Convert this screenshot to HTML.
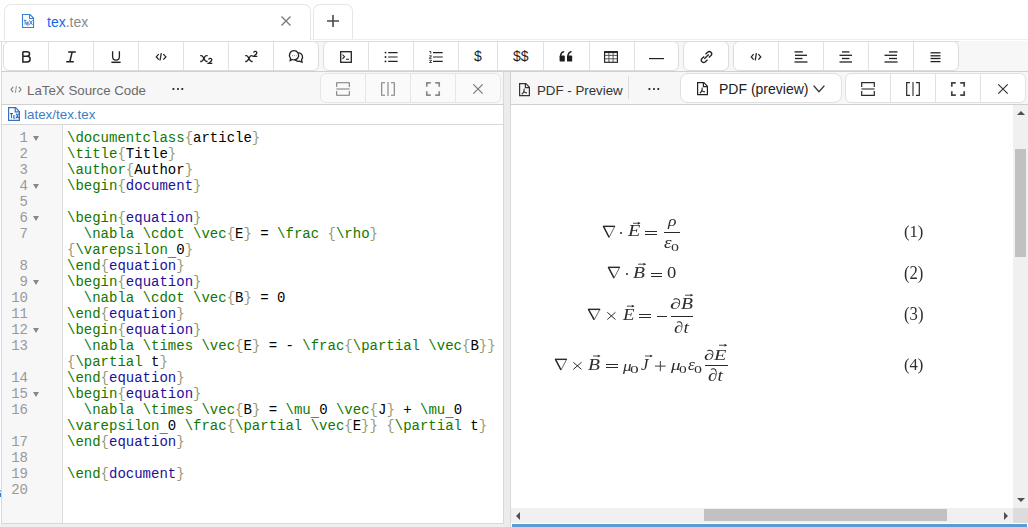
<!DOCTYPE html>
<html><head><meta charset="utf-8"><style>
*{box-sizing:border-box;margin:0;padding:0}
html,body{width:1028px;height:527px;overflow:hidden;background:#fff;font-family:"Liberation Sans",sans-serif}
body{position:relative}
.a{position:absolute}
svg{position:absolute;overflow:visible}
.tab{position:absolute;border:1px solid #e6e6e6;border-bottom:none;border-radius:7px 7px 0 0;background:#fff}
.grp{position:absolute;top:41px;height:30px;border:1px solid #dcdcdc;border-radius:6px;background:#fff;overflow:hidden}
.dv{position:absolute;top:0;width:1px;height:29px;background:#e0e0e0}
.ph{position:absolute;top:71px;height:34px;background:#f7f7f7;border-top:1px solid #d0d0d0;border-bottom:1px solid #d0d0d0}
.bg2{position:absolute;top:73px;height:30px;border:1px solid #e6e6e6;border-radius:6px;background:#fafafa;overflow:hidden}
.code{position:absolute;left:67px;font-family:"Liberation Mono",monospace;font-size:14px;line-height:16px;white-space:pre;color:#000}
.t{color:#117700}.b{color:#999977}.at{color:#221199}
.ln{position:absolute;left:2px;width:26px;text-align:right;color:#999;font-family:"Liberation Mono",monospace;font-size:14px;line-height:16px}
.fold{position:absolute;left:33px;width:0;height:0;border-left:3px solid transparent;border-right:3px solid transparent;border-top:5px solid #888}
.m{position:absolute;font-family:"Liberation Serif",serif;font-size:16px;line-height:16px;color:#222;white-space:nowrap}
</style></head><body>
<!-- tab bar -->
<div class="tab" style="left:4px;top:4px;width:307px;height:36px"></div>
<div class="tab" style="left:313px;top:4px;width:40px;height:36px"></div>
<div class="a" style="left:311px;top:39px;width:717px;height:1px;background:#eee"></div>
<!-- tex file icon -->
<svg style="left:22px;top:14px" width="12" height="14" viewBox="0 0 12 14" fill="none" stroke="#3a7fd0" stroke-width="1.1">
<path d="M0.5 0.5H8L11.5 4V13.5H0.5Z"/><path d="M7.5 0.5V4.5H11.5"/>
<path d="M1.8 6.3H4.4M3.1 6.3V10.6M4.8 8.2H6.8M4.8 9.6H6.6M4.8 11H6.8M4.8 8.2V11M7.4 6.3L10.4 10.8M10.4 6.3L7.4 10.8" stroke-width="1"/>
</svg>
<div class="a" style="left:47px;top:14px;font-size:14px;line-height:17px"><span style="color:#1269f0">tex</span><span style="color:#8a8a8a">.tex</span></div>
<svg style="left:281px;top:16px" width="10" height="10" viewBox="0 0 10 10" stroke="#777" stroke-width="1.3"><path d="M0.5 0.5L9.5 9.5M9.5 0.5L0.5 9.5"/></svg>
<svg style="left:327px;top:15px" width="12" height="12" viewBox="0 0 12 12" stroke="#4a4a4a" stroke-width="1.6"><path d="M6 0V12M0 6H12"/></svg>
<div class="a" style="left:1px;top:41px;width:1027px;height:31px;background:#f7f7f7;border-bottom:1px solid #d5d5d5;border-left:1px solid #dcdcdc"></div>
<div class="a" style="left:2px;top:42px;width:10px;height:28px;background:#fff"></div>
<div class="a" style="left:0px;top:41px;width:959px;height:1px;background:#dcdcdc"></div>
<div class="grp" style="left:3px;width:316px"><div class="dv" style="left:44px"></div><div class="dv" style="left:89px"></div><div class="dv" style="left:134px"></div><div class="dv" style="left:179px"></div><div class="dv" style="left:224px"></div><div class="dv" style="left:269px"></div></div>
<div class="grp" style="left:323px;width:356px"><div class="dv" style="left:44px"></div><div class="dv" style="left:89px"></div><div class="dv" style="left:134px"></div><div class="dv" style="left:173px"></div><div class="dv" style="left:219px"></div><div class="dv" style="left:265px"></div><div class="dv" style="left:310px"></div></div>
<div class="grp" style="left:683px;width:46px"></div>
<div class="grp" style="left:733px;width:226px"><div class="dv" style="left:44px"></div><div class="dv" style="left:89px"></div><div class="dv" style="left:134px"></div><div class="dv" style="left:179px"></div></div>
<svg style="left:21px;top:50px" width="11" height="14" viewBox="0 0 11 14" fill="none" stroke="#222" stroke-width="1.5" ><path d="M1.85 1.85H5.9Q8.55 1.85 8.55 4.0Q8.55 6.15 5.9 6.15H1.85M5.9 6.15H6.3Q9.15 6.15 9.15 9.05Q9.15 11.95 6.3 11.95H1.85V1.85"/></svg>
<svg style="left:66px;top:51px" width="10" height="12" viewBox="0 0 10 12" fill="none" stroke="#222" stroke-width="1.5" ><path d="M2.2 0.9H9.8M0.2 10.7H7.8M6.2 0.9L3.8 10.7"/></svg>
<svg style="left:111px;top:51px" width="10" height="12" viewBox="0 0 10 12" fill="none" stroke="#222" stroke-width="1.3" ><path d="M1.6 0.2V5.2Q1.6 9.1 5 9.1Q8.4 9.1 8.4 5.2V0.2"/><path d="M0.4 11.3H9.6" stroke-width="1.5"/></svg>
<svg style="left:155px;top:53px" width="12" height="8" viewBox="0 0 12 8" fill="none" stroke="#222" stroke-width="1.25" ><path d="M3.7 1.1L1.3 3.9L3.8 6.6M8.3 1.1L10.9 3.9L8.3 6.6M6.3 0.2L5 7.5"/></svg>
<svg style="left:199.5px;top:54.8px" width="8" height="7" viewBox="0 0 8 7" fill="none" stroke="#222" stroke-width="1.4" ><path d="M0.2 0.6H1.4Q2.6 0.6 3.9 3.5Q5.2 6.4 6.4 6.4H7.6M0.2 6.4H1.4Q2.6 6.4 3.9 3.5Q5.2 0.6 6.4 0.6H7.6" stroke-width="1.45"/></svg>
<svg style="left:207.8px;top:58.2px" width="5" height="6" viewBox="0 0 5 6" fill="none" stroke="#222" stroke-width="1.4" ><path d="M0.5 1.5Q1.2 0.3 2.4 0.4Q4 0.6 3.8 2Q3.6 2.9 2.2 3.9L0.4 5.3H4.3" stroke-width="1.2"/></svg>
<svg style="left:244.5px;top:54.8px" width="8" height="7" viewBox="0 0 8 7" fill="none" stroke="#222" stroke-width="1.4" ><path d="M0.2 0.6H1.4Q2.6 0.6 3.9 3.5Q5.2 6.4 6.4 6.4H7.6M0.2 6.4H1.4Q2.6 6.4 3.9 3.5Q5.2 0.6 6.4 0.6H7.6" stroke-width="1.45"/></svg>
<svg style="left:252.6px;top:51.2px" width="5" height="6" viewBox="0 0 5 6" fill="none" stroke="#222" stroke-width="1.4" ><path d="M0.5 1.5Q1.2 0.3 2.4 0.4Q4 0.6 3.8 2Q3.6 2.9 2.2 3.9L0.4 5.3H4.3" stroke-width="1.2"/></svg>
<svg style="left:289px;top:50px" width="14" height="13" viewBox="0 0 14 13" fill="none" stroke="#222" stroke-width="1.3" ><path d="M5.2 0.7A4.6 4.6 0 1 1 3.2 9.5L1.2 10.6L1.6 8.3A4.6 4.6 0 0 1 5.2 0.7Z"/><path d="M9.6 2.6A4.4 4.4 0 0 1 12.6 9.7L13 12.1L10.5 11.1A4.6 4.6 0 0 1 6.2 10.1"/><circle cx="3.4" cy="5.7" r="0.45" fill="#222" stroke="none"/><circle cx="5.4" cy="5.7" r="0.45" fill="#222" stroke="none"/><circle cx="7.4" cy="5.7" r="0.45" fill="#666" stroke="none"/></svg>
<svg style="left:340px;top:51px" width="12" height="12" viewBox="0 0 12 12" fill="none" stroke="#222" stroke-width="1.3" ><rect x="0.7" y="0.7" width="10.6" height="10.6"/><path d="M2.5 3.5L4.5 5.7L2.5 7.9M6 8.3H9" stroke-width="1.1"/></svg>
<svg style="left:384px;top:51px" width="14" height="12" viewBox="0 0 14 12" fill="none" stroke="#222" stroke-width="1.2" ><circle cx="1.5" cy="1.6" r="0.95" fill="#222" stroke="none"/><circle cx="1.5" cy="6" r="0.95" fill="#222" stroke="none"/><circle cx="1.5" cy="10.4" r="0.95" fill="#222" stroke="none"/><path d="M4.2 1.6H13.6M4.2 6H13.6M4.2 10.4H13.6"/></svg>
<svg style="left:429px;top:51px" width="14" height="12" viewBox="0 0 14 12" fill="none" stroke="#222" stroke-width="1.2" ><path d="M4 1.6H13.7M4 6H13.7M4 10.4H13.7"/><path d="M0.3 0.5H1.8V2.8M0.3 4.8H2.6L0.3 7.3H2.6M0.3 9.3H2.6L1.5 10.4L2.6 11.5H0.3" stroke-width="0.9"/></svg>
<div class="a" style="left:474px;top:47px;font-size:14px;line-height:19px;color:#222">$</div>
<div class="a" style="left:513px;top:47px;font-size:14px;line-height:19px;color:#222">$$</div>
<svg style="left:559px;top:50px" width="14" height="12" viewBox="0 0 14 12" fill="none" stroke="none" stroke-width="1.4" ><rect x="0.6" y="5.6" width="5.2" height="6" rx="0.9" fill="#1e1e1e"/><path d="M1.5 7Q1.5 2.6 4.6 1.7" fill="none" stroke="#1e1e1e" stroke-width="1.5" stroke-linecap="round"/><g transform="translate(7.4,0)"><rect x="0.6" y="5.6" width="5.2" height="6" rx="0.9" fill="#1e1e1e"/><path d="M1.5 7Q1.5 2.6 4.6 1.7" fill="none" stroke="#1e1e1e" stroke-width="1.5" stroke-linecap="round"/></g></svg>
<svg style="left:604px;top:51px" width="14" height="12" viewBox="0 0 14 12" fill="none" stroke="#222" stroke-width="1.15" ><path d="M0.6 4.4H13.4M0.6 7.8H13.4M4.9 0.7V11.3M9.1 0.7V11.3" stroke="#555" stroke-width="1"/><rect x="0.6" y="0.7" width="12.8" height="10.6"/><path d="M0.6 1.1H13.4" stroke-width="1.9"/></svg>
<svg style="left:649px;top:58px" width="15" height="2" viewBox="0 0 15 2" fill="none" stroke="#222" stroke-width="1.2" ><path d="M0 0.6H15"/></svg>
<svg style="left:700px;top:51px" width="13" height="12" viewBox="0 0 13 12" fill="none" stroke="#222" stroke-width="1.3" ><path d="M5.5 3.3L7.6 1.3Q9.3 -0.2 11 1.3Q12.6 2.9 11 4.6L8.8 6.6"/><path d="M7.5 8.7L5.4 10.7Q3.7 12.2 2 10.7Q0.4 9.1 2 7.4L4.2 5.4"/><path d="M4.3 7.7L8.7 3.5"/></svg>
<svg style="left:750px;top:53px" width="12" height="8" viewBox="0 0 12 8" fill="none" stroke="#222" stroke-width="1.25" ><path d="M3.6 1.1L1.3 3.9L3.6 6.6M8.4 1.1L10.8 3.9L8.4 6.6M6.4 0.2L5.2 7.3"/></svg>
<svg style="left:794px;top:51px" width="14" height="12" viewBox="0 0 14 12" fill="none" stroke="#222" stroke-width="1.3" ><path d="M0.5 0.9H8.8"/><path d="M1 4.3H13"/><path d="M1 7.5H8.5"/><path d="M0.5 11H13.5"/></svg>
<svg style="left:839px;top:51px" width="14" height="12" viewBox="0 0 14 12" fill="none" stroke="#222" stroke-width="1.3" ><path d="M3 0.9H10.5"/><path d="M0.5 4.3H13"/><path d="M3 7.5H10.5"/><path d="M0.5 11H13"/></svg>
<svg style="left:884px;top:51px" width="14" height="12" viewBox="0 0 14 12" fill="none" stroke="#222" stroke-width="1.3" ><path d="M5 0.9H13.5"/><path d="M0.5 4.3H13"/><path d="M5 7.5H13"/><path d="M0.5 11H13.5"/></svg>
<svg style="left:929px;top:51px" width="14" height="12" viewBox="0 0 14 12" fill="none" stroke="#222" stroke-width="1.3" ><path d="M1.5 1.8H11.5"/><path d="M1.5 4.8H11.5"/><path d="M1.5 7.5H11.5"/><path d="M1.5 10.6H11.5"/></svg>
<div class="ph" style="left:1px;width:503px;border-left:1px solid #d8d8d8;border-right:1px solid #d8d8d8"></div>
<div class="a" style="left:504px;top:71px;width:6px;height:456px;background:#ececec;border-top:1px solid #d0d0d0"></div>
<div class="a" style="left:510px;top:71px;width:1px;height:456px;background:#dadada"></div>
<div class="ph" style="left:510px;width:518px;border-left:1px solid #d0d0d0"></div>
<div class="a" style="left:1px;top:105px;width:503px;height:419px;border-left:1px solid #d8d8d8;border-right:1px solid #d8d8d8;border-bottom:1px solid #d8d8d8;background:#fff"></div>
<div class="a" style="left:2px;top:124px;width:501px;height:1px;background:#d8d8d8"></div>
<div class="a" style="left:2px;top:125px;width:61px;height:398px;background:#f7f7f7;border-right:1px solid #dcdcdc"></div>
<div class="a" style="left:0;top:524px;width:504px;height:3px;background:#efefef"></div>
<div class="a" style="left:0;top:490px;width:1px;height:2px;background:#8ab8f0"></div><div class="a" style="left:0;top:493px;width:1px;height:4px;background:#2a7be0"></div>
<svg style="left:10px;top:86px" width="12" height="8" viewBox="0 0 12 8" fill="none" stroke="#777" stroke-width="1.05" ><path d="M3.2 0.9L1 3.5L3.2 6.1M8.8 0.9L11 3.5L8.8 6.1"/><path d="M6.4 0.1L5.4 6.9" stroke-width="0.8"/></svg>
<div class="a" style="left:27px;top:83px;font-size:13.3px;line-height:16px;color:#6b6b6b">LaTeX Source Code</div>
<svg style="left:172px;top:87px" width="12" height="3" viewBox="0 0 12 3" fill="#2a2a2a" stroke="none" stroke-width="1.4" ><rect x="0.5" y="1.1" width="1.8" height="1.8" rx="0.3"/><rect x="5.1" y="1.1" width="1.8" height="1.8" rx="0.3"/><rect x="9.4" y="1.1" width="1.8" height="1.8" rx="0.3"/></svg>
<div class="bg2" style="left:320px;width:181px"><div class="dv" style="left:44px;height:28px;background:#e6e6e6"></div><div class="dv" style="left:89px;height:28px;background:#e6e6e6"></div><div class="dv" style="left:134px;height:28px;background:#e6e6e6"></div></div>
<svg style="left:336px;top:82px" width="14" height="14" viewBox="0 0 14 14" fill="none" stroke="#7a7a7a" stroke-width="1.05" ><path d="M0.7 5V0.7H13.3V5M0.7 9V13.3H13.3V9"/><path d="M0.4 7H13.6" stroke="#b8b8b8" stroke-width="2"/></svg>
<svg style="left:381px;top:82px" width="14" height="14" viewBox="0 0 14 14" fill="none" stroke="#7a7a7a" stroke-width="1.05" ><path d="M4 0.7H0.7V13.3H4M10 0.7H13.3V13.3H10"/><path d="M7 0V14" stroke="#b8b8b8" stroke-width="2"/></svg>
<svg style="left:426px;top:82px" width="14" height="14" viewBox="0 0 14 14" fill="none" stroke="#8a8a8a" stroke-width="1.7" ><path d="M0.8 4.8V0.8H4.8M9.2 0.8H13.2V4.8M13.2 9.2V13.2H9.2M4.8 13.2H0.8V9.2"/></svg>
<svg style="left:473px;top:84px" width="10" height="10" viewBox="0 0 10 10" fill="none" stroke="#777" stroke-width="1.2" ><path d="M0.3 0.3L9.7 9.7M9.7 0.3L0.3 9.7"/></svg>
<svg style="left:519px;top:83px" width="11" height="13" viewBox="0 0 11 13" fill="none" stroke="#333" stroke-width="1.2" ><path d="M0.6 0.6H6.8L10.4 4.2V12.6H0.6Z"/><path d="M6.4 0.6V4.6H10.4"/><path d="M5.1 5.6Q5.5 7.6 4.3 9.6Q3.6 10.6 2.8 11.2M4.6 8.6Q6 9.8 8 9.9" stroke-width="1.1"/></svg>
<div class="a" style="left:537px;top:83px;font-size:13.3px;line-height:16px;color:#333">PDF - Preview</div>
<div class="a" style="left:628px;top:76px;width:1px;height:23px;background:#ddd"></div>
<svg style="left:648px;top:87px" width="12" height="3" viewBox="0 0 12 3" fill="#2a2a2a" stroke="none" stroke-width="1.4" ><rect x="0.5" y="1.1" width="1.8" height="1.8" rx="0.3"/><rect x="5.1" y="1.1" width="1.8" height="1.8" rx="0.3"/><rect x="9.4" y="1.1" width="1.8" height="1.8" rx="0.3"/></svg>
<div class="a" style="left:680px;top:73px;width:162px;height:30px;border:1px solid #e0e0e0;border-radius:8px;background:#fff"></div>
<svg style="left:697px;top:82px" width="11" height="14" viewBox="0 0 11 14" fill="none" stroke="#222" stroke-width="1.2" ><path d="M0.6 0.6H6.8L10.4 4.2V12.6H0.6Z"/><path d="M6.4 0.6V4.6H10.4"/><path d="M5.1 5.6Q5.5 7.6 4.3 9.6Q3.6 10.6 2.8 11.2M4.6 8.6Q6 9.8 8 9.9" stroke-width="1.1"/></svg>
<div class="a" style="left:719px;top:81px;font-size:14px;line-height:17px;color:#222">PDF (preview)</div>
<svg style="left:813px;top:85px" width="12" height="8" viewBox="0 0 12 8" fill="none" stroke="#333" stroke-width="1.4" ><path d="M0.6 0.6L6 6.6L11.4 0.6"/></svg>
<div class="bg2" style="left:845px;width:181px;background:#fff;border-color:#e0e0e0"><div class="dv" style="left:44px;height:28px"></div><div class="dv" style="left:89px;height:28px"></div><div class="dv" style="left:134px;height:28px"></div></div>
<svg style="left:861px;top:82px" width="14" height="14" viewBox="0 0 14 14" fill="none" stroke="#2a2a2a" stroke-width="1.2" ><path d="M0.7 5V0.7H13.3V5M0.7 9V13.3H13.3V9"/><path d="M0.4 7H13.6" stroke="#8a8a8a" stroke-width="2"/></svg>
<svg style="left:906px;top:82px" width="14" height="14" viewBox="0 0 14 14" fill="none" stroke="#2a2a2a" stroke-width="1.2" ><path d="M4 0.7H0.7V13.3H4M10 0.7H13.3V13.3H10"/><path d="M7 0V14" stroke="#8a8a8a" stroke-width="2"/></svg>
<svg style="left:951px;top:82px" width="14" height="14" viewBox="0 0 14 14" fill="none" stroke="#444" stroke-width="1.7" ><path d="M0.8 4.8V0.8H4.8M9.2 0.8H13.2V4.8M13.2 9.2V13.2H9.2M4.8 13.2H0.8V9.2"/></svg>
<svg style="left:998px;top:84px" width="10" height="10" viewBox="0 0 10 10" fill="none" stroke="#333" stroke-width="1.2" ><path d="M0.3 0.3L9.7 9.7M9.7 0.3L0.3 9.7"/></svg>
<svg style="left:8px;top:107px" width="12" height="14" viewBox="0 0 12 14" fill="none" stroke="#3272c2" stroke-width="1.2" ><path d="M0.6 0.6H7.5L11.4 4.5V13.4H0.6Z"/><path d="M7.2 0.6V4.8H11.4"/><path d="M1.9 6.6H5.1M3.5 6.6V11.3M8.1 6.6L10.7 11.3M10.7 6.6L8.1 11.3" stroke-width="1.1"/><path d="M5.5 8.6H7.3M5.5 10H7.1M5.5 11.3H7.3M5.5 8.6V11.3" stroke-width="0.8"/></svg>
<div class="a" style="left:24px;top:107px;font-size:13.4px;line-height:16px;color:#3a7fc6">latex/tex.tex</div>
<div class="ln" style="top:130px">1</div><div class="fold" style="top:136px"></div><div class="code" style="top:130px"><span class="t">\documentclass</span><span class="b">{</span>article<span class="b">}</span></div>
<div class="ln" style="top:146px">2</div><div class="code" style="top:146px"><span class="t">\title</span><span class="b">{</span>Title<span class="b">}</span></div>
<div class="ln" style="top:162px">3</div><div class="code" style="top:162px"><span class="t">\author</span><span class="b">{</span>Author<span class="b">}</span></div>
<div class="ln" style="top:178px">4</div><div class="fold" style="top:184px"></div><div class="code" style="top:178px"><span class="t">\begin</span><span class="b">{</span><span class="at">document</span><span class="b">}</span></div>
<div class="ln" style="top:194px">5</div><div class="ln" style="top:210px">6</div><div class="fold" style="top:216px"></div><div class="code" style="top:210px"><span class="t">\begin</span><span class="b">{</span><span class="at">equation</span><span class="b">}</span></div>
<div class="ln" style="top:226px">7</div><div class="code" style="top:226px">  <span class="t">\nabla</span> <span class="t">\cdot</span> <span class="t">\vec</span><span class="b">{</span>E<span class="b">}</span> = <span class="t">\frac</span> <span class="b">{</span><span class="t">\rho</span><span class="b">}</span></div>
<div class="code" style="top:242px"><span class="b">{</span><span class="t">\varepsilon</span><span style="position:relative;top:2px">_</span>0<span class="b">}</span></div>
<div class="ln" style="top:258px">8</div><div class="code" style="top:258px"><span class="t">\end</span><span class="b">{</span><span class="at">equation</span><span class="b">}</span></div>
<div class="ln" style="top:274px">9</div><div class="fold" style="top:280px"></div><div class="code" style="top:274px"><span class="t">\begin</span><span class="b">{</span><span class="at">equation</span><span class="b">}</span></div>
<div class="ln" style="top:290px">10</div><div class="code" style="top:290px">  <span class="t">\nabla</span> <span class="t">\cdot</span> <span class="t">\vec</span><span class="b">{</span>B<span class="b">}</span> = 0</div>
<div class="ln" style="top:306px">11</div><div class="code" style="top:306px"><span class="t">\end</span><span class="b">{</span><span class="at">equation</span><span class="b">}</span></div>
<div class="ln" style="top:322px">12</div><div class="fold" style="top:328px"></div><div class="code" style="top:322px"><span class="t">\begin</span><span class="b">{</span><span class="at">equation</span><span class="b">}</span></div>
<div class="ln" style="top:338px">13</div><div class="code" style="top:338px">  <span class="t">\nabla</span> <span class="t">\times</span> <span class="t">\vec</span><span class="b">{</span>E<span class="b">}</span> = - <span class="t">\frac</span><span class="b">{</span><span class="t">\partial</span> <span class="t">\vec</span><span class="b">{</span>B<span class="b">}</span><span class="b">}</span></div>
<div class="code" style="top:354px"><span class="b">{</span><span class="t">\partial</span> t<span class="b">}</span></div>
<div class="ln" style="top:370px">14</div><div class="code" style="top:370px"><span class="t">\end</span><span class="b">{</span><span class="at">equation</span><span class="b">}</span></div>
<div class="ln" style="top:386px">15</div><div class="fold" style="top:392px"></div><div class="code" style="top:386px"><span class="t">\begin</span><span class="b">{</span><span class="at">equation</span><span class="b">}</span></div>
<div class="ln" style="top:402px">16</div><div class="code" style="top:402px">  <span class="t">\nabla</span> <span class="t">\times</span> <span class="t">\vec</span><span class="b">{</span>B<span class="b">}</span> = <span class="t">\mu</span><span style="position:relative;top:2px">_</span>0 <span class="t">\vec</span><span class="b">{</span>J<span class="b">}</span> + <span class="t">\mu</span><span style="position:relative;top:2px">_</span>0</div>
<div class="code" style="top:418px"><span class="t">\varepsilon</span><span style="position:relative;top:2px">_</span>0 <span class="t">\frac</span><span class="b">{</span><span class="t">\partial</span> <span class="t">\vec</span><span class="b">{</span>E<span class="b">}</span><span class="b">}</span> <span class="b">{</span><span class="t">\partial</span> t<span class="b">}</span></div>
<div class="ln" style="top:434px">17</div><div class="code" style="top:434px"><span class="t">\end</span><span class="b">{</span><span class="at">equation</span><span class="b">}</span></div>
<div class="ln" style="top:450px">18</div><div class="ln" style="top:466px">19</div><div class="code" style="top:466px"><span class="t">\end</span><span class="b">{</span><span class="at">document</span><span class="b">}</span></div>
<div class="ln" style="top:482px">20</div><div class="a" style="left:511px;top:105px;width:502px;height:403px;background:#fff"></div>
<div class="a" style="left:0;top:0;width:1028px;height:527px;will-change:transform">
<svg style="left:602.7px;top:225.5px" width="12.00" height="11.60" viewBox="0 0 12.00 11.60"><path d="M0 0H12.00L6.00 11.60Z" fill="none" stroke="#2a2a2a" stroke-width="0.7"/><path d="M0.6 0.5L6.00 11.00" stroke="#2a2a2a" stroke-width="1.4"/><path d="M0 0.5H12.00" stroke="#2a2a2a" stroke-width="1.1"/></svg>
<div class="a" style="left:620.45px;top:231.85px;width:1.9px;height:1.9px;border-radius:50%;background:#2a2a2a"></div>
<div class="a" style="left:628.20px;top:223.45px;font-family:'Liberation Serif',serif;font-style:italic;font-size:16.92px;line-height:1;color:#2e2e2e;white-space:nowrap;transform:scaleX(1.192);transform-origin:0 0;">E</div>
<svg style="left:632.6px;top:221.5px" width="7.50" height="2.50" viewBox="0 0 7.50 2.50"><path d="M0 1.25H6.50" stroke="#2a2a2a" stroke-width="0.85"/><path d="M4.70 -0.2L7.50 1.25L4.70 2.70Q5.30 1.25 4.70 -0.2Z" fill="#2a2a2a"/></svg>
<div class="a" style="left:645.3px;top:231.12px;width:11.50px;height:0.75px;background:#2a2a2a"></div>
<div class="a" style="left:645.3px;top:234.12px;width:11.50px;height:0.75px;background:#2a2a2a"></div>
<div class="a" style="left:663.6px;top:232.45px;width:16.30px;height:0.9px;background:#2a2a2a"></div>
<div class="a" style="left:668.05px;top:214.26px;font-family:'Liberation Serif',serif;font-style:italic;font-size:14.56px;line-height:1;color:#2e2e2e;white-space:nowrap;transform:scaleX(1.213);transform-origin:0 0;">ρ</div>
<div class="a" style="left:664.02px;top:235.20px;font-family:'Liberation Serif',serif;font-style:italic;font-size:16.67px;line-height:1;color:#2e2e2e;white-space:nowrap;transform:scaleX(1.151);transform-origin:0 0;">ε</div>
<div class="a" style="left:670.96px;top:242.34px;font-family:'Liberation Serif',serif;font-style:normal;font-size:10.90px;line-height:1;color:#2e2e2e;white-space:nowrap;transform:scaleX(1.464);transform-origin:0 0;">0</div>
<div class="a" style="left:903.83px;top:222.83px;font-family:'Liberation Serif',serif;font-style:normal;font-size:17.67px;line-height:1;color:#2e2e2e;white-space:nowrap;transform:scaleX(0.943);transform-origin:0 0;">(1)</div>
<svg style="left:608.1px;top:266.9px" width="11.80" height="11.30" viewBox="0 0 11.80 11.30"><path d="M0 0H11.80L5.90 11.30Z" fill="none" stroke="#2a2a2a" stroke-width="0.7"/><path d="M0.6 0.5L5.90 10.70" stroke="#2a2a2a" stroke-width="1.4"/><path d="M0 0.5H11.80" stroke="#2a2a2a" stroke-width="1.1"/></svg>
<div class="a" style="left:625.85px;top:272.75px;width:1.9px;height:1.9px;border-radius:50%;background:#2a2a2a"></div>
<div class="a" style="left:633.40px;top:264.74px;font-family:'Liberation Serif',serif;font-style:italic;font-size:16.46px;line-height:1;color:#2e2e2e;white-space:nowrap;transform:scaleX(1.194);transform-origin:0 0;">B</div>
<svg style="left:637.6px;top:262.6px" width="8.20" height="2.40" viewBox="0 0 8.20 2.40"><path d="M0 1.20H7.20" stroke="#2a2a2a" stroke-width="0.85"/><path d="M5.40 -0.2L8.20 1.20L5.40 2.60Q6.00 1.20 5.40 -0.2Z" fill="#2a2a2a"/></svg>
<div class="a" style="left:651.3px;top:272.62px;width:11.10px;height:0.75px;background:#2a2a2a"></div>
<div class="a" style="left:651.3px;top:275.62px;width:11.10px;height:0.75px;background:#2a2a2a"></div>
<div class="a" style="left:667.16px;top:264.38px;font-family:'Liberation Serif',serif;font-style:normal;font-size:17.31px;line-height:1;color:#2e2e2e;white-space:nowrap;transform:scaleX(1.073);transform-origin:0 0;">0</div>
<div class="a" style="left:903.83px;top:263.75px;font-family:'Liberation Serif',serif;font-style:normal;font-size:18.22px;line-height:1;color:#2e2e2e;white-space:nowrap;transform:scaleX(0.915);transform-origin:0 0;">(2)</div>
<svg style="left:588.1px;top:309.0px" width="12.10" height="11.00" viewBox="0 0 12.10 11.00"><path d="M0 0H12.10L6.05 11.00Z" fill="none" stroke="#2a2a2a" stroke-width="0.7"/><path d="M0.6 0.5L6.05 10.40" stroke="#2a2a2a" stroke-width="1.4"/><path d="M0 0.5H12.10" stroke="#2a2a2a" stroke-width="1.1"/></svg>
<svg style="left:607px;top:312px" width="8.80" height="7.80" viewBox="0 0 8.80 7.80"><path d="M0.3 0.3L8.50 7.50M8.50 0.3L0.3 7.50" stroke="#2a2a2a" stroke-width="1.0"/></svg>
<div class="a" style="left:622.59px;top:306.72px;font-family:'Liberation Serif',serif;font-style:italic;font-size:16.00px;line-height:1;color:#2e2e2e;white-space:nowrap;transform:scaleX(1.177);transform-origin:0 0;">E</div>
<svg style="left:626.6px;top:304.6px" width="7.50" height="2.30" viewBox="0 0 7.50 2.30"><path d="M0 1.15H6.50" stroke="#2a2a2a" stroke-width="0.85"/><path d="M4.70 -0.2L7.50 1.15L4.70 2.50Q5.30 1.15 4.70 -0.2Z" fill="#2a2a2a"/></svg>
<div class="a" style="left:639.3px;top:314.43px;width:11.30px;height:0.75px;background:#2a2a2a"></div>
<div class="a" style="left:639.3px;top:317.43px;width:11.30px;height:0.75px;background:#2a2a2a"></div>
<div class="a" style="left:657.4px;top:315.82px;width:9.60px;height:0.75px;background:#2a2a2a"></div>
<div class="a" style="left:670.9px;top:316.05px;width:22.60px;height:0.9px;background:#2a2a2a"></div>
<div class="a" style="left:670.23px;top:297.37px;font-family:'Liberation Serif',serif;font-style:italic;font-size:14.79px;line-height:1;color:#2e2e2e;white-space:nowrap;transform:scaleX(1.513);transform-origin:0 0;">∂</div>
<div class="a" style="left:681.00px;top:296.32px;font-family:'Liberation Serif',serif;font-style:italic;font-size:16.00px;line-height:1;color:#2e2e2e;white-space:nowrap;transform:scaleX(1.228);transform-origin:0 0;">B</div>
<svg style="left:685.0px;top:293.8px" width="8.20" height="2.40" viewBox="0 0 8.20 2.40"><path d="M0 1.20H7.20" stroke="#2a2a2a" stroke-width="0.85"/><path d="M5.40 -0.2L8.20 1.20L5.40 2.60Q6.00 1.20 5.40 -0.2Z" fill="#2a2a2a"/></svg>
<div class="a" style="left:674.32px;top:319.82px;font-family:'Liberation Serif',serif;font-style:italic;font-size:16.16px;line-height:1;color:#2e2e2e;white-space:nowrap;transform:scaleX(1.188);transform-origin:0 0;">∂t</div>
<div class="a" style="left:903.83px;top:305.91px;font-family:'Liberation Serif',serif;font-style:normal;font-size:17.78px;line-height:1;color:#2e2e2e;white-space:nowrap;transform:scaleX(0.938);transform-origin:0 0;">(3)</div>
<svg style="left:554.8px;top:358.8px" width="11.80" height="11.20" viewBox="0 0 11.80 11.20"><path d="M0 0H11.80L5.90 11.20Z" fill="none" stroke="#2a2a2a" stroke-width="0.7"/><path d="M0.6 0.5L5.90 10.60" stroke="#2a2a2a" stroke-width="1.4"/><path d="M0 0.5H11.80" stroke="#2a2a2a" stroke-width="1.1"/></svg>
<svg style="left:573.2px;top:362px" width="8.80" height="7.70" viewBox="0 0 8.80 7.70"><path d="M0.3 0.3L8.50 7.40M8.50 0.3L0.3 7.40" stroke="#2a2a2a" stroke-width="1.0"/></svg>
<div class="a" style="left:588.30px;top:356.64px;font-family:'Liberation Serif',serif;font-style:italic;font-size:16.46px;line-height:1;color:#2e2e2e;white-space:nowrap;transform:scaleX(1.194);transform-origin:0 0;">B</div>
<svg style="left:593.3px;top:354.8px" width="7.50" height="2.00" viewBox="0 0 7.50 2.00"><path d="M0 1.00H6.50" stroke="#2a2a2a" stroke-width="0.85"/><path d="M4.70 -0.2L7.50 1.00L4.70 2.20Q5.30 1.00 4.70 -0.2Z" fill="#2a2a2a"/></svg>
<div class="a" style="left:606px;top:364.02px;width:11.90px;height:0.75px;background:#2a2a2a"></div>
<div class="a" style="left:606px;top:367.02px;width:11.90px;height:0.75px;background:#2a2a2a"></div>
<div class="a" style="left:622.90px;top:358.54px;font-family:'Liberation Serif',serif;font-style:italic;font-size:14.48px;line-height:1;color:#2e2e2e;white-space:nowrap;transform:scaleX(1.176);transform-origin:0 0;">μ</div>
<div class="a" style="left:630.30px;top:364.17px;font-family:'Liberation Serif',serif;font-style:normal;font-size:10.75px;line-height:1;color:#2e2e2e;white-space:nowrap;transform:scaleX(1.617);transform-origin:0 0;">0</div>
<div class="a" style="left:641.07px;top:356.57px;font-family:'Liberation Serif',serif;font-style:italic;font-size:16.82px;line-height:1;color:#2e2e2e;white-space:nowrap;">J</div>
<svg style="left:645.2px;top:355px" width="7.80" height="2.00" viewBox="0 0 7.80 2.00"><path d="M0 1.00H6.80" stroke="#2a2a2a" stroke-width="0.85"/><path d="M5.00 -0.2L7.80 1.00L5.00 2.20Q5.60 1.00 5.00 -0.2Z" fill="#2a2a2a"/></svg>
<svg style="left:655px;top:360.9px" width="10.70" height="10.20" viewBox="0 0 10.70 10.20"><path d="M5.35 0V10.20M0 5.10H10.70" stroke="#2a2a2a" stroke-width="0.9"/></svg>
<div class="a" style="left:670.70px;top:357.92px;font-family:'Liberation Serif',serif;font-style:italic;font-size:15.07px;line-height:1;color:#2e2e2e;white-space:nowrap;transform:scaleX(1.256);transform-origin:0 0;">μ</div>
<div class="a" style="left:679.28px;top:363.69px;font-family:'Liberation Serif',serif;font-style:normal;font-size:11.19px;line-height:1;color:#2e2e2e;white-space:nowrap;transform:scaleX(1.383);transform-origin:0 0;">0</div>
<div class="a" style="left:687.85px;top:357.43px;font-family:'Liberation Serif',serif;font-style:italic;font-size:16.04px;line-height:1;color:#2e2e2e;white-space:nowrap;transform:scaleX(1.078);transform-origin:0 0;">ε</div>
<div class="a" style="left:694.26px;top:363.69px;font-family:'Liberation Serif',serif;font-style:normal;font-size:11.19px;line-height:1;color:#2e2e2e;white-space:nowrap;transform:scaleX(1.425);transform-origin:0 0;">0</div>
<div class="a" style="left:704.5px;top:365.45px;width:23.40px;height:0.9px;background:#2a2a2a"></div>
<div class="a" style="left:704.29px;top:347.83px;font-family:'Liberation Serif',serif;font-style:italic;font-size:14.25px;line-height:1;color:#2e2e2e;white-space:nowrap;transform:scaleX(1.421);transform-origin:0 0;">∂</div>
<div class="a" style="left:714.30px;top:346.63px;font-family:'Liberation Serif',serif;font-style:italic;font-size:15.38px;line-height:1;color:#2e2e2e;white-space:nowrap;transform:scaleX(1.311);transform-origin:0 0;">E</div>
<svg style="left:718.6px;top:343.5px" width="8.20" height="2.50" viewBox="0 0 8.20 2.50"><path d="M0 1.25H7.20" stroke="#2a2a2a" stroke-width="0.85"/><path d="M5.40 -0.2L8.20 1.25L5.40 2.70Q6.00 1.25 5.40 -0.2Z" fill="#2a2a2a"/></svg>
<div class="a" style="left:707.72px;top:367.27px;font-family:'Liberation Serif',serif;font-style:italic;font-size:17.53px;line-height:1;color:#2e2e2e;white-space:nowrap;transform:scaleX(1.096);transform-origin:0 0;">∂t</div>
<div class="a" style="left:903.83px;top:356.13px;font-family:'Liberation Serif',serif;font-style:normal;font-size:17.67px;line-height:1;color:#2e2e2e;white-space:nowrap;transform:scaleX(0.943);transform-origin:0 0;">(4)</div>
</div>
<div class="a" style="left:1013px;top:105px;width:15px;height:403px;background:#f0f0f0"></div>
<div class="a" style="left:1015px;top:149px;width:11px;height:108px;background:#c1c1c1"></div>
<svg style="left:1017px;top:111px" width="8" height="4" viewBox="0 0 8 4" fill="#505050" stroke="none" stroke-width="1.4" ><path d="M0 4L4 0L8 4Z"/></svg>
<svg style="left:1017px;top:498px" width="8" height="4" viewBox="0 0 8 4" fill="#505050" stroke="none" stroke-width="1.4" ><path d="M0 0L4 4L8 0Z"/></svg>
<div class="a" style="left:511px;top:508px;width:502px;height:15px;background:#f0f0f0"></div>
<div class="a" style="left:1013px;top:508px;width:15px;height:15px;background:#dcdcdc"></div>
<div class="a" style="left:704px;top:509px;width:243px;height:12px;background:#c1c1c1"></div>
<svg style="left:516px;top:512px" width="4" height="8" viewBox="0 0 4 8" fill="#505050" stroke="none" stroke-width="1.4" ><path d="M4 0L0 4L4 8Z"/></svg>
<svg style="left:1004px;top:512px" width="4" height="8" viewBox="0 0 4 8" fill="#505050" stroke="none" stroke-width="1.4" ><path d="M0 0L4 4L0 8Z"/></svg>
<div class="a" style="left:512px;top:524px;width:515px;height:3px;background:#5b9bd5"></div>
</body></html>
